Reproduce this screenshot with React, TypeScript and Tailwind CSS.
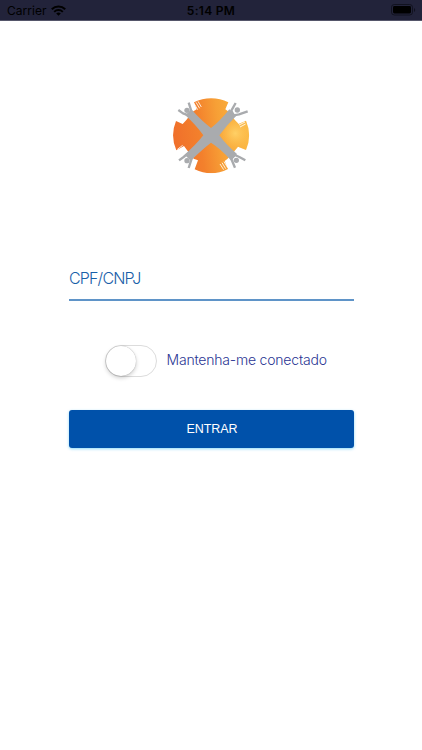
import { useState } from "react";

function StatusBar() {
  return (
    <header className="relative flex h-[21px] items-center justify-between border-b border-[#55566a] bg-[#22233a] pl-[7px] pr-1.5 pt-px font-['Inter',sans-serif] text-black">
      <div className="flex items-center gap-1">
        <span className="text-[12px] leading-5 tracking-[0.05px]">Carrier</span>
        <svg className="-mt-px" width="15" height="11" viewBox="0 0 15 11" fill="none" stroke="currentColor">
          <path d="M0.8 4.2a9.6 9.6 0 0 1 13.4 0" strokeWidth="2.1" />
          <path d="M3.2 6.8a6.1 6.1 0 0 1 8.6 0" strokeWidth="1.9" />
          <path d="M7.5 10.8L5.2 8.5a3.3 3.3 0 0 1 4.6 0z" fill="currentColor" stroke="none" />
        </svg>
      </div>
      <span className="absolute inset-x-0 text-center text-[12px] font-semibold leading-5 tracking-[0.3px]">
        5:14 PM
      </span>
      <svg className="-mt-px" width="25" height="12" viewBox="0 0 25 12">
        <rect x="0.5" y="0.5" width="21" height="10.5" rx="2.8" fill="none" stroke="#11121f" />
        <rect x="2" y="2" width="18" height="7.5" rx="1.4" />
        <path d="M23 4v4c1.6-.6 1.6-3.4 0-4z" fill="#11121f" />
      </svg>
    </header>
  );
}

function Logo() {
  return (
    <svg className="size-[90px]" viewBox="0 0 270 270" aria-hidden="true">
      <defs>
        <linearGradient id="disc" x1="22" y1="150" x2="248" y2="120" gradientUnits="userSpaceOnUse">
          <stop offset="0" stopColor="#f06f2b" />
          <stop offset="0.35" stopColor="#f3802c" />
          <stop offset="0.62" stopColor="#f7a036" />
          <stop offset="1" stopColor="#fbb944" />
        </linearGradient>
        <radialGradient id="glow" cx="208" cy="130" r="62" gradientUnits="userSpaceOnUse">
          <stop offset="0" stopColor="#ffd066" />
          <stop offset="1" stopColor="#fcb843" stopOpacity="0" />
        </radialGradient>
        <clipPath id="round">
          <path d="M84 37A112 112 0 0 1 187 37L178 58L186 64L207 91L218 102L240 92A112 112 0 0 1 240 180L216 170L205 184L184 207L176 213L186 237A112 112 0 0 1 86 238L96 211L83 206L65 183L54 168L31 181A112 112 0 0 1 30 93L50 102L61 90L80 65L92 58Z" />
        </clipPath>
      </defs>
      <g clipPath="url(#round)">
        <rect width="270" height="270" fill="url(#disc)" />
        <rect width="270" height="270" fill="url(#glow)" />
      </g>
      <g fill="none" stroke="#fff" strokeWidth="2.5">
        <path d="M84 40l11 19M90 37l11 18M96 34l10 17" />
        <path d="M216 99l18-9M219 105l18-9M222 111l17-9" />
        <path d="M34 178l16-12M37 184l17-12M41 190l17-12" />
        <path d="M162 222l11 17M168 218l11 18M174 215l11 18" />
      </g>
      <g fill="#a9abae">
        <path d="M58 76L76 58Q108 94 135 114Q162 94 190 58L211 77Q182 105 160 136Q180 164 213 192L196 212Q164 176 135 158Q110 177 74 212L56 194Q90 164 112 136Q91 106 58 76Z" />
        <circle cx="63" cy="61" r="8" />
        <circle cx="214" cy="60" r="8" />
        <circle cx="63" cy="212" r="8" />
        <circle cx="211" cy="211" r="8" />
      </g>
      <g fill="none" stroke="#a9abae" strokeWidth="7" strokeLinejoin="round">
        <path d="M37 60L51 70L70 77L76 63L68 38" />
        <path d="M209 39L196 62L203 76L219 73L245 64" />
        <path d="M39 211L53 201L65 191L78 203L68 234" />
        <path d="M207 233L195 205L207 195L220 201L238 211" />
      </g>
    </svg>
  );
}

export default function App() {
  const [keepLogged, setKeepLogged] = useState(false);

  return (
    <div className="min-h-[750px] bg-white font-['Liberation_Sans',sans-serif]">
      <StatusBar />

      <main className="flex flex-col px-[69px] pt-[69px]">
        <div className="flex justify-center">
          <Logo />
        </div>

        <input
          className="mt-[77px] h-11 w-[285px] border-b-2 border-[#5f94c8] font-['Inter',sans-serif] text-[16px] font-light tracking-[-0.8px] text-[#1960a8] outline-none placeholder:text-[#1960a8] placeholder:opacity-100"
          placeholder="CPF/CNPJ"
        />

        <div className="mt-11 flex items-center gap-2.5 pl-9">
          <button
            role="switch"
            aria-checked={keepLogged}
            aria-label="Mantenha-me conectado"
            onClick={() => setKeepLogged(!keepLogged)}
            className={`flex h-8 w-[51.5px] rounded-full border-[1.5px] border-[#dcdcdc] ${keepLogged ? "justify-end bg-[#0051aa]" : "bg-white"}`}
          >
            <span className="size-[30px] rounded-full bg-white shadow-[0_2px_4px_rgba(0,0,0,0.2),0_0_1px_rgba(0,0,0,0.35)]" />
          </button>
          <span className="-mt-[3px] whitespace-nowrap font-['Inter',sans-serif] text-[14px] font-light tracking-[-0.2px] text-[#2a3593]">
            Mantenha-me conectado
          </span>
        </div>

        <button className="mt-[33px] h-[38px] w-[285px] rounded-[3px] bg-[#0051aa] pl-px pt-px text-[12.5px] tracking-[-0.1px] text-white shadow-[0_1px_3px_rgba(0,174,239,0.45)]">
          ENTRAR
        </button>
      </main>
    </div>
  );
}
